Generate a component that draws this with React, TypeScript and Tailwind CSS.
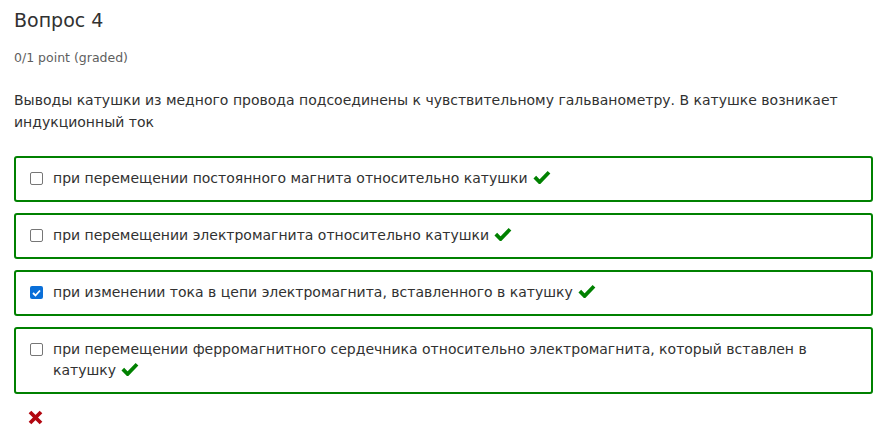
import React from "react";

const Check = () => (
  <svg width="18" height="14" viewBox="0 0 18 14" className="ml-[5px] inline-block align-[-1px]">
    <path d="M1.8 7.2 L6.6 12 L16 2.2" fill="none" stroke="#008100" strokeWidth="3.8" strokeLinecap="butt" strokeLinejoin="miter" />
  </svg>
);

const Box = ({ checked }: { checked: boolean }) =>
  checked ? (
    <span className="mt-[4px] flex h-[13px] w-[13px] shrink-0 items-center justify-center rounded-[2px] bg-[#0a6fd8]">
      <svg width="9" height="8" viewBox="0 0 9 8">
        <path d="M1 4 L3.5 6.5 L8 1.5" fill="none" stroke="white" strokeWidth="1.8" />
      </svg>
    </span>
  ) : (
    <span className="mt-[4px] block h-[13px] w-[13px] shrink-0 rounded-[2px] border border-[#767676] bg-white" />
  );

const options = [
  { text: "при перемещении постоянного магнита относительно катушки", checked: false },
  { text: "при перемещении электромагнита относительно катушки", checked: false },
  { text: "при изменении тока в цепи электромагнита, вставленного в катушку", checked: true },
  {
    text: "при перемещении ферромагнитного сердечника относительно электромагнита, который вставлен в катушку",
    checked: false,
  },
];

export default function App() {
  return (
    <div className="min-h-screen bg-white pl-[14px] pr-[10px] pt-[6px] text-[#313131]" style={{ fontFamily: '"DejaVu Sans", sans-serif' }}>
      <h3 className="text-[19px] leading-[28px] font-normal text-[#313131]">Вопрос 4</h3>
      <div className="mt-[15px] text-[12.5px] leading-[18px] text-[#5e5e5e]">0/1 point (graded)</div>
      <p className="mt-[22px] text-[14px] leading-[22px] pr-[30px]">
        Выводы катушки из медного провода подсоединены к чувствительному гальванометру. В катушке возникает индукционный ток
      </p>
      <div className="mt-[23px] flex flex-col gap-[11px]">
        {options.map((o, i) => (
          <div key={i} className="flex items-start gap-[10px] rounded-[3px] border-2 border-[#008100] pl-[14px] pr-[40px] pt-[10px] pb-[11px] text-[14px] leading-[21px]">
            <Box checked={o.checked} />
            <span>
              {o.text}
              <Check />
            </span>
          </div>
        ))}
      </div>
      <div className="mt-[16px] pl-[14px]">
        <svg width="15" height="15" viewBox="0 0 15 15">
          <path d="M2 2 L13 13 M13 2 L2 13" stroke="#b20610" strokeWidth="3.8" />
        </svg>
      </div>
    </div>
  );
}
